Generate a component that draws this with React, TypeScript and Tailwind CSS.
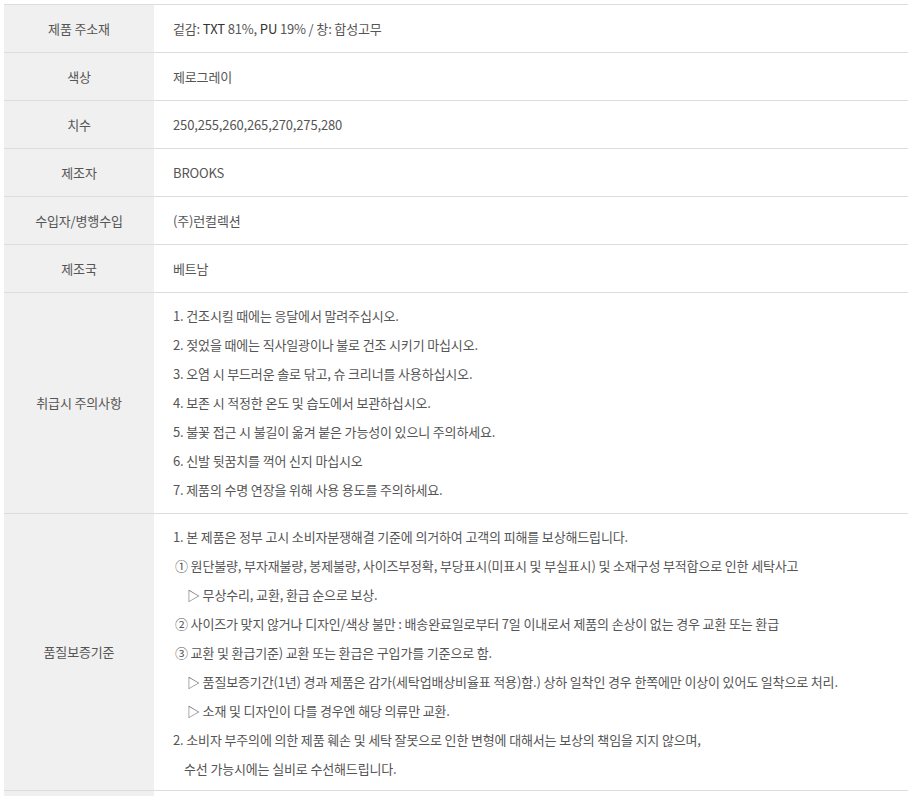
const font = { fontFamily: '"Noto Sans CJK KR", "Noto Sans", sans-serif' };

type Row = { label: string; value: React.ReactNode };

function Cell({ label, children }: { label: string; children: React.ReactNode }) {
  return (
    <div className="grid h-[48px] grid-cols-[150px_1fr] border-b border-[#dddddd]">
      <div className="flex items-center justify-center bg-[#f0f0f0] text-[13px] text-[#555555]">
        {label}
      </div>
      <div className="flex items-center pl-[19px] text-[13px] text-[#555555]">{children}</div>
    </div>
  );
}

const care = [
  '1. 건조시킬 때에는 응달에서 말려주십시오.',
  '2. 젖었을 때에는 직사일광이나 불로 건조 시키기 마십시오.',
  '3. 오염 시 부드러운 솔로 닦고, 슈 크리너를 사용하십시오.',
  '4. 보존 시 적정한 온도 및 습도에서 보관하십시오.',
  '5. 불꽃 접근 시 불길이 옮겨 붙은 가능성이 있으니 주의하세요.',
  '6. 신발 뒷꿈치를 꺽어 신지 마십시오',
  '7. 제품의 수명 연장을 위해 사용 용도를 주의하세요.',
];

const quality: [string, string][] = [
  ['pl-0', '1. 본 제품은 정부 고시 소비자분쟁해결 기준에 의거하여 고객의 피해를 보상해드립니다.'],
  ['pl-[2px]', '① 원단불량, 부자재불량, 봉제불량, 사이즈부정확, 부당표시(미표시 및 부실표시) 및 소재구성 부적합으로 인한 세탁사고'],
  ['pl-[14px]', '▷ 무상수리, 교환, 환급 순으로 보상.'],
  ['pl-[2px]', '② 사이즈가 맞지 않거나 디자인/색상 불만 : 배송완료일로부터 7일 이내로서 제품의 손상이 없는 경우 교환 또는 환급'],
  ['pl-[2px]', '③ 교환 및 환급기준) 교환 또는 환급은 구입가를 기준으로 함.'],
  ['pl-[14px]', '▷ 품질보증기간(1년) 경과 제품은 감가(세탁업배상비율표 적용)함.) 상하 일착인 경우 한쪽에만 이상이 있어도 일착으로 처리.'],
  ['pl-[14px]', '▷ 소재 및 디자인이 다를 경우엔 해당 의류만 교환.'],
  ['pl-0', '2. 소비자 부주의에 의한 제품 훼손 및 세탁 잘못으로 인한 변형에 대해서는 보상의 책임을 지지 않으며,'],
  ['pl-[11px]', '수선 가능시에는 실비로 수선해드립니다.'],
];

export default function App() {
  const rows: Row[] = [
    {
      label: '제품 주소재',
      value: (
        <span>
          겉감: <span className="text-[#333333]">TXT</span> 81%, <span className="text-[#333333]">PU</span> 19% / 창: 합성고무
        </span>
      ),
    },
    { label: '색상', value: '제로그레이' },
    { label: '치수', value: '250,255,260,265,270,275,280' },
    { label: '제조자', value: 'BROOKS' },
    { label: '수입자/병행수입', value: '(주)런컬렉션' },
    { label: '제조국', value: '베트남' },
  ];

  return (
    <div className="min-h-screen bg-white pt-[4px] tracking-[-0.15px]" style={font}>
      <div className="ml-[4px] w-[904px] border-t border-[#dddddd]">
        {rows.map((r) => (
          <Cell key={r.label} label={r.label}>
            {r.value}
          </Cell>
        ))}
        <div className="grid grid-cols-[150px_1fr] border-b border-[#dddddd]">
          <div className="flex items-center justify-center bg-[#f0f0f0] text-[13px] text-[#555555]">
            취급시 주의사항
          </div>
          <div className="pl-[19px] pt-[8px] pb-[9px] text-[13px] leading-[29px] text-[#555555]">
            {care.map((c) => (
              <p key={c}>{c}</p>
            ))}
          </div>
        </div>
        <div className="grid grid-cols-[150px_1fr] border-b border-[#dddddd]">
          <div className="flex items-center justify-center bg-[#f0f0f0] text-[13px] text-[#555555]">
            품질보증기준
          </div>
          <div className="pl-[19px] pt-[8px] pb-[7px] text-[13px] leading-[29px] text-[#555555]">
            {quality.map(([pad, t]) => (
              <p key={t} className={pad}>
                {t}
              </p>
            ))}
          </div>
        </div>
        <div className="grid grid-cols-[150px_1fr]">
          <div className="h-[40px] bg-[#f0f0f0]" />
          <div />
        </div>
      </div>
    </div>
  );
}
